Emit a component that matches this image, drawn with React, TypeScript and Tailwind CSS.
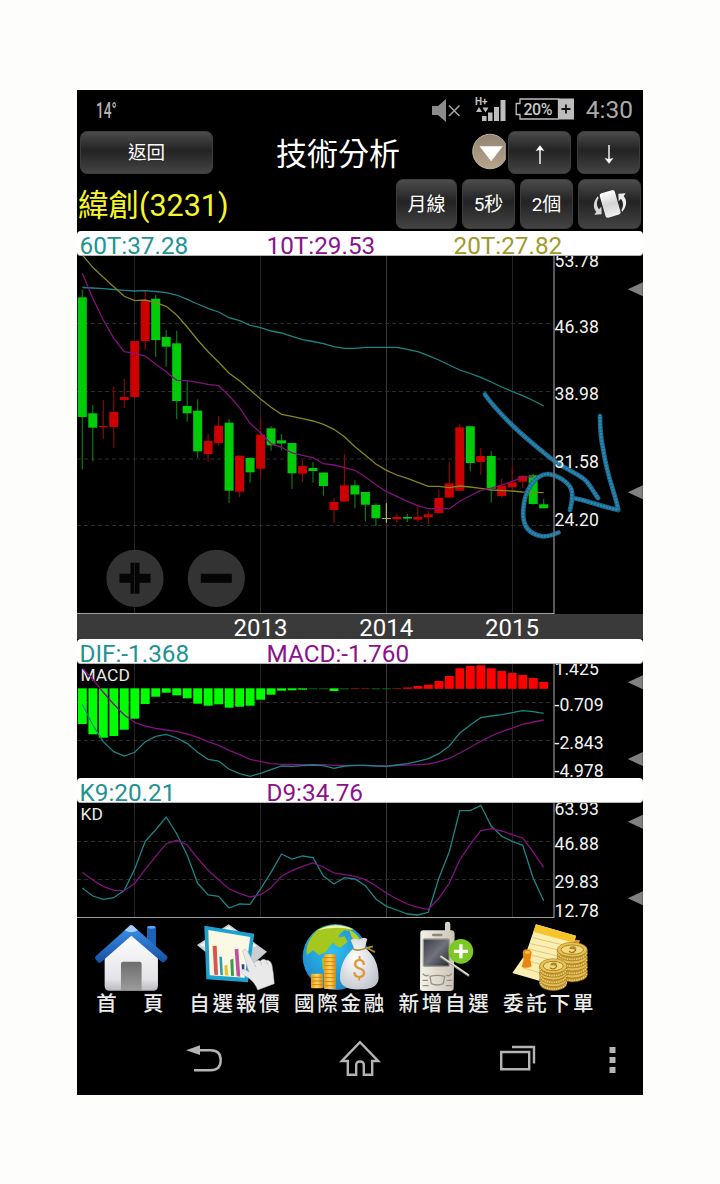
import type { ReactNode } from "react";

const STEP = 10.486;
const FIRST_X = 82.3;

// [high, open/close top, open/close bottom, low, direction]
const candles: [number, number, number, number, string][] = [
  [289.5, 297.3, 417, 469.3, "g"],
  [405, 413.3, 427.7, 461.5, "g"],
  [400, 426, 427.2, 439, "r"],
  [386.7, 412, 427, 447.7, "r"],
  [379, 397, 400, 408, "r"],
  [341, 341, 397, 398, "r"],
  [291, 300, 341, 349.7, "r"],
  [294.7, 298.7, 340, 357, "g"],
  [330, 337, 346.7, 366.7, "g"],
  [330.7, 343.3, 401, 419, "g"],
  [381.3, 406, 413.3, 421.7, "g"],
  [399.3, 410.7, 451.3, 457.7, "g"],
  [434, 441, 454, 461.7, "r"],
  [416, 425.7, 443, 446, "r"],
  [419, 422.7, 490.7, 503, "g"],
  [455.7, 455.7, 491.7, 497, "r"],
  [457, 458, 472.3, 482.7, "g"],
  [418, 434.7, 468.7, 479, "r"],
  [426, 428.3, 445.3, 450.7, "g"],
  [434, 440.3, 443.5, 450.5, "g"],
  [443, 443, 473.3, 488.7, "g"],
  [460, 466, 473.7, 482, "r"],
  [462, 468, 471, 482.7, "g"],
  [472.5, 472.5, 486, 495.7, "g"],
  [497.7, 502, 510, 523, "r"],
  [454, 485.3, 501.5, 502, "r"],
  [480.3, 485.3, 494.5, 508.3, "g"],
  [492, 492, 504.7, 521.5, "g"],
  [503.3, 505, 518.3, 526, "g"],
  [503.3, 518, 518.9, 522.7, "y"],
  [513.7, 517, 519.3, 522.5, "r"],
  [513.7, 517, 518.6, 522, "g"],
  [506.3, 517, 519.7, 521.7, "r"],
  [510.7, 514.3, 517.2, 524, "r"],
  [490, 498, 513, 513.5, "r"],
  [461.7, 483.3, 497.5, 498, "r"],
  [424, 427.3, 490.7, 491, "r"],
  [426, 426.3, 463, 471.3, "g"],
  [448, 456, 462, 474.7, "r"],
  [451, 456, 488.7, 502.7, "g"],
  [478.7, 485.7, 496, 498, "r"],
  [466.7, 482.3, 487.3, 489, "r"],
  [475, 476, 481.7, 487.7, "r"],
  [474, 475.3, 504, 505, "g"],
  [499, 504.3, 508.3, 508.5, "g"],
];

const ma60 = [
  287.5, 288, 288.7, 289.5, 290.3, 291, 290.7, 291.5, 292.7, 295, 299.3, 304,
  308.3, 312, 317.7, 320.7, 325.3, 327.7, 331, 333, 336.3, 339.7, 341.5, 343.7,
  346.7, 348.3, 348.3, 347.3, 347.3, 347.3, 347.3, 349.3, 351.7, 355.7, 360, 365,
  370, 373.5, 377.3, 382, 387, 391.5, 395.7, 400.5, 406,
];
const ma20 = [
  255, 267.3, 277.3, 286.7, 296.3, 300.7, 300, 302.7, 306.3, 315, 327, 340,
  351.7, 362.3, 373.3, 380.7, 390, 399, 407.3, 414.3, 416.3, 418.7, 421, 424.3,
  429.3, 436.7, 446.7, 455.3, 464, 470.3, 475, 478.3, 482.3, 486.3, 486.3, 487.7,
  486, 487, 488.3, 490, 490.5, 491, 492, 492.3, 492.7,
];
const ma10 = [
  273.3, 298.3, 320, 338.3, 351.7, 353.3, 356, 364.3, 371.7, 380.3, 380.7, 382.3,
  384.3, 385.7, 395.7, 407.7, 423.3, 432.7, 443.7, 447.3, 452.9, 455.3, 457.7,
  463.7, 465, 467.7, 470.3, 477, 484.7, 491.7, 496.3, 501.3, 505.7, 508.7, 508.7,
  508.7, 501.3, 495.7, 490.3, 488.2, 485, 481.3, 477.3, 476.7,
];

const ZERO = 688.5;
const histogram = [
  724, 734.3, 737.7, 736, 729.7, 718.7, 704, 696.7, 692.7, 695.3, 698.3, 703.7,
  705.7, 704.3, 707.7, 706.7, 705.7, 699.7, 694.7, 690.7, 690.3, 689.7, 688.6,
  688.6, 691, 688.6, 688.4, 688.4, 688.6, 688.6, 688.4, 687.5, 686, 684.7, 681,
  676, 668.3, 666, 665.3, 668.3, 671, 673, 675, 678, 682,
];
const dif = [
  704.3, 725, 741.7, 751.7, 756, 752.3, 741.7, 736.3, 734.3, 738, 743.3, 752.3,
  759.3, 761, 769.3, 773.7, 776.3, 773.3, 769.7, 766, 766.3, 765.7, 765, 765.7,
  768.3, 766, 765.3, 765.3, 766, 766.3, 765, 763.7, 761.3, 758.7, 753.7, 746, 733,
  725, 717.7, 716, 714.7, 712.7, 710.7, 711.7, 713.3,
];
const macd = [
  668.3, 679.3, 692.3, 704.3, 715, 722.3, 726, 728.3, 730, 731.3, 734, 737.3,
  741.7, 745.3, 750.3, 754.7, 759.3, 761.7, 763.7, 764.3, 764.5, 764.6, 764.7,
  764.7, 765.3, 765.4, 765.5, 765.5, 765.6, 766, 765.5, 765.2, 764.7, 764, 761.7,
  758.3, 753, 747.3, 741.3, 736, 731.7, 728, 724.3, 722, 720,
];
const k9 = [
  888, 896, 899.3, 897.7, 890.3, 869, 841.3, 829.7, 817, 833.7, 855, 883.3, 895,
  896.3, 908, 904, 904.3, 889, 872.3, 854, 859, 856, 857.7, 876, 884, 877.7, 879,
  885.7, 899, 906.3, 910, 914, 915, 912.3, 878.3, 851.7, 810.7, 810.7, 805.3, 826,
  836.3, 841.3, 845.3, 878.3, 900.7,
];
const d9 = [
  872.3, 880, 886.3, 890.3, 890.7, 883.3, 869.3, 856.3, 843.7, 840.3, 845, 858.3,
  870.3, 879.7, 889, 893.3, 897, 894.7, 887.7, 876.3, 870.7, 866.3, 863, 867, 873,
  874.7, 876.3, 879.7, 886, 893, 899, 904, 907.3, 909.3, 898.3, 883.3, 859.7,
  844.3, 830.7, 828.7, 831, 834.7, 838, 852, 867.7,
];

const TEAL = "#1c8585";
const PURPLE = "#84107f";
const OLIVE = "#85851f";

const Line = ({ data, color }: { data: number[]; color: string }) => (
  <polyline
    points={data.map((y, i) => `${FIRST_X + i * STEP},${y}`).join(" ")}
    fill="none"
    stroke={color}
    strokeWidth="1.3"
  />
);

type PanelProps = {
  top: number;
  height: number;
  grid: number[];
  labels: [string, number][];
  markers: number[];
  bottomLine?: boolean;
  children: ReactNode;
};

const Panel = ({
  top,
  height,
  grid,
  labels,
  markers,
  bottomLine = true,
  children,
}: PanelProps) => (
  <svg
    className="block shrink-0"
    width="566"
    height={height}
    viewBox={`77 ${top} 566 ${height}`}
  >
    {[134.5, 260.5, 386.5, 512.5].map((x) => (
      <path
        key={x}
        d={`M${x} ${top}v${height}`}
        stroke={x === 386.5 ? "#383838" : "#242424"}
      />
    ))}
    {grid.map((y) => (
      <path
        key={y}
        d={`M77 ${y}H553`}
        stroke="#2c2c2c"
        strokeDasharray="4 3"
      />
    ))}
    {children}
    <path d={`M554 ${top}v${height}`} stroke="#707070" strokeWidth="1.6" />
    {bottomLine && (
      <path d={`M77 ${top + height - 0.5}H554`} stroke="#a0a0a0" />
    )}
    {labels.map(([text, y]) => (
      <text key={text} x="554.6" y={y} fill="#f2f2f2" fontSize="17.6">
        {text}
      </text>
    ))}
    {markers.map((y) => (
      <path key={y} d={`M627.8 ${y}l15 -7v14z`} fill="#808080" />
    ))}
  </svg>
);

const Legend = ({ items }: { items: [string, string][] }) => (
  <div className="flex h-[25px] shrink-0 rounded-[4px] border-b border-[#b5b5b5] bg-white pl-[2.5px]">
    {items.map(([text, color]) => (
      <span
        key={text}
        className="w-[187px] text-[24.3px] leading-[29px]"
        style={{ color }}
      >
        {text}
      </span>
    ))}
  </div>
);

const Button = ({
  className,
  children,
}: {
  className: string;
  children: ReactNode;
}) => (
  <button
    className={`flex shrink-0 items-center justify-center rounded-[7px] border border-[#3c3c3c] bg-linear-to-b from-[#4c4c4c] via-[#232323] via-45% to-[#444] text-white ${className}`}
  >
    {children}
  </button>
);

const StatusBar = () => (
  <div className="flex h-[41px] shrink-0 items-center pr-[10px] pl-[19px] text-[#aaa]">
    <div className="w-[335px]">
      <span className="inline-block origin-left scale-x-[.62] text-[22px] font-medium text-[#b4b4b4]">
        14°
      </span>
    </div>
    <svg width="30" height="24" viewBox="0 0 30 24" className="mt-px shrink-0">
      <path d="M1 7h6l8 -7v23l-8 -7H1z" fill="#8c8c8c" />
      <path d="M18 6.5l10.500 10.500M28.500 6.500l-10.500 10.500" stroke="#a2a2a2" strokeWidth="1.6" />
    </svg>
    <svg width="32" height="26" viewBox="0 0 32 26" className="ml-[14px] -mt-[4px] shrink-0">
      <text x="0" y="8.600" fontSize="10" fontWeight="700" fill="#c4c4c4">
        H+
      </text>
      <path d="M1 16l3 -5 3 5zM7.500 11.500h6l-3 5z" fill="#bbb" />
      <path
        d="M7 20h4.500v5h-4.500zM13 16.500h4.500v8.500h-4.500zM19 11h5v14h-5zM25.500 4h5v21h-5z"
        fill="#bdbdbd"
      />
    </svg>
    <div className="-mt-[3px] ml-[8px] flex h-[22px] w-[59px] shrink-0 items-center">
      <svg width="59" height="22" viewBox="0 0 59 22">
        <path
          d="M43.500 1H5v4.500H1.200v11H5V21h38.500z"
          fill="none"
          stroke="#c0c0c0"
          strokeWidth="1.300"
        />
        <rect x="44" y="0.500" width="15" height="21" fill="#bcbcbc" />
        <path d="M46.500 11h9M51 6.500v9" stroke="#111" strokeWidth="1.800" />
        <text x="8.500" y="16.800" fontSize="16" fontWeight="500" fill="#c8c8c8" textLength="29">
          20%
        </text>
      </svg>
    </div>
    <span className="ml-auto text-[24.500px] leading-none">4:30</span>
  </div>
);

const ArrowIcon = ({ down = false }: { down?: boolean }) => (
  <svg
    width="14"
    height="22"
    viewBox="0 0 14 22"
    className={down ? "mt-[3px] rotate-180" : "mt-[4px]"}
    fill="none"
    stroke="#fff"
  >
    <path d="M7 20V3" strokeWidth="1.400" />
    <path d="M7 1.500l4 5.300c-1.500 -1 -6.500 -1 -8 0z" fill="#fff" strokeWidth=".4" />
  </svg>
);

const RotateIcon = () => (
  <svg width="34" height="34" viewBox="0 0 102 102">
    <defs>
      <linearGradient id="phone" x1="0" y1="0" x2="0" y2="1">
        <stop offset="0" stopColor="#fff" />
        <stop offset=".5" stopColor="#d4d4d4" />
        <stop offset="1" stopColor="#efefef" />
      </linearGradient>
    </defs>
    <rect
      x="28"
      y="13"
      width="47"
      height="76"
      rx="7"
      fill="url(#phone)"
      transform="rotate(-16 51 51)"
    />
    <path d="M14 28C-1 46 0 64 10 74l-6 9 22 -1 -1 -23 -7 8C10 56 10 44 17 33z" fill="#d8d8d8" />
    <path
      d="M14 28C-1 46 0 64 10 74l-6 9 22 -1 -1 -23 -7 8C10 56 10 44 17 33z"
      fill="#ececec"
      transform="rotate(180 51 51)"
    />
  </svg>
);

const Header = () => (
  <div className="h-[100px] shrink-0">
    <div className="flex h-[48px] items-start pl-[3px]">
      <Button className="h-[43px] w-[133px] pt-[3px] text-[18.500px]">返回</Button>
      <h1 className="ml-[63px] w-[126px] text-[31px] leading-[48px] whitespace-nowrap text-white">
        技術分析
      </h1>
      <svg width="36" height="40" viewBox="0 0 36 40" className="ml-[70px] shrink-0">
        <defs>
          <linearGradient id="tan" x1="0" y1="0" x2="0" y2="1">
            <stop offset="0" stopColor="#918473" />
            <stop offset="1" stopColor="#b6a58c" />
          </linearGradient>
        </defs>
        <path
          d="M33.300 12.500A17.300 17.300 0 1 0 33.300 28.500z"
          fill="url(#tan)"
          stroke="#cfc3ae"
          strokeWidth=".8"
        />
        <path d="M7.500 15.300h23.300l-11.600 15z" fill="#fff" />
      </svg>
      <Button className="h-[43px] w-[63px]">
        <ArrowIcon />
      </Button>
      <Button className="ml-[6px] h-[43px] w-[63px]">
        <ArrowIcon down />
      </Button>
    </div>
    <div className="flex items-start text-[19px]">
      <span className="h-[50px] w-[319px] pl-px text-[30.500px] leading-[53px] text-[#f6f62a]">
        緯創(3231)
      </span>
      <Button className="h-[50px] w-[61px] pt-[3px]">月線</Button>
      <Button className="ml-[5px] h-[50px] w-[53px] pt-[3px]">5秒</Button>
      <Button className="ml-[5px] h-[50px] w-[53px] pt-[3px]">2個</Button>
      <Button className="ml-[5px] h-[50px] w-[63px]">
        <RotateIcon />
      </Button>
    </div>
  </div>
);

const candleFill: Record<string, string> = {
  g: "#00cc0a",
  r: "#cc0000",
  y: "#b9b95a",
};
const wickStroke: Record<string, string> = {
  g: "#0a7a0d",
  r: "#8a0808",
  y: "#b9b95a",
};

const Scribble = ({ d }: { d: string }) => (
  <g fill="none" strokeLinecap="round" strokeLinejoin="round">
    <path d={d} stroke="#1e6f96" strokeWidth="4.600" />
    <path d={d} stroke="#2b8ab4" strokeWidth="2.200" />
    <path d={d} stroke="#14506e" strokeWidth="5" strokeDasharray=".8 2.400" strokeLinecap="butt" opacity=".6" />
  </g>
);

const PriceChart = () => (
  <Panel
    top={256}
    height={358}
    grid={[323.5, 391.5, 459, 525.5]}
    labels={[
      ["53.78", 267],
      ["46.38", 332.8],
      ["38.98", 400.2],
      ["31.58", 467.8],
      ["24.20", 525.5],
    ]}
    markers={[289.3, 492.3]}
  >
    {candles.map(([high, top, bottom, low, dir], i) => {
      const x = FIRST_X + i * STEP;
      return (
        <g key={i}>
          <path d={`M${x} ${high}V${low}`} stroke={wickStroke[dir]} strokeWidth="1.200" />
          <rect
            x={Math.max(77.5, x - 4.5)}
            y={top}
            width="9"
            height={bottom - top}
            fill={candleFill[dir]}
          />
        </g>
      );
    })}
    <Line data={ma60} color={TEAL} />
    <Line data={ma20} color={OLIVE} />
    <Line data={ma10} color={PURPLE} />
    <circle cx="135" cy="578.300" r="28.600" fill="#333" />
    <path d="M119.500 578.300h31M135 562.800v31" stroke="#050505" strokeWidth="9" />
    <path d="M134.500 563v31" stroke="#1c1c1c" />
    <circle cx="216.300" cy="578.300" r="28.600" fill="#333" />
    <path d="M200.800 578.300h31" stroke="#050505" strokeWidth="9" />
    <Scribble d="M485 394.500C490 402 500 413 510 423S533 444 546.700 455C556 463 562 466 570 470.500C578 475 583 477 587 482C592 488 594 493 598 498" />
    <Scribble d="M600 416C600 428 601 440 603.300 450C606 468 609 477 613 490C615 497 617 503 618.300 510C609 508 602 506 593.300 503.300C585 500.500 579 499 572 497.800" />
    <Scribble d="M570 510C572 502 573 495 571.500 490C569 482 557 475 548.300 474C541 474 536 478 531.500 484C526 492 522.500 503 523.300 517C524 527 530 534 541.700 536.200C548 537 553 535 558.500 532.500" />
  </Panel>
);

const MacdChart = () => (
  <Panel
    top={664}
    height={114}
    grid={[702.5, 740.5]}
    labels={[
      ["1.425", 674.5],
      ["-0.709", 710.8],
      ["-2.843", 749],
      ["-4.978", 777.4],
    ]}
    markers={[682.3, 759]}
    bottomLine={false}
  >
    <text x="80.500" y="680.800" fontSize="17.400" fill="#e8e8e8">
      MACD
    </text>
    {histogram.map((y, i) => {
      const x = Math.max(77.6, FIRST_X + i * STEP - 4.4);
      const flat = Math.abs(y - ZERO) < 0.5;
      const up = y < ZERO;
      const fill = up ? (flat ? "#7a0808" : "#ff0000") : flat ? "#0a6a0a" : "#00ff00";
      return (
        <rect
          key={i}
          x={x}
          y={up ? (flat ? 688 : y) : 688.3}
          width="8.900"
          height={flat ? 1 : up ? 688.8 - y : y - 688.3}
          fill={fill}
        />
      );
    })}
    <Line data={macd} color={PURPLE} />
    <Line data={dif} color={TEAL} />
  </Panel>
);

const KdChart = () => (
  <Panel
    top={803}
    height={115}
    grid={[841.5, 879.5]}
    labels={[
      ["63.93", 814.5],
      ["46.88", 850.3],
      ["29.83", 888.3],
      ["12.78", 916.6],
    ]}
    markers={[821.7, 898.3]}
  >
    <text x="80.500" y="820.300" fontSize="17.400" fill="#e8e8e8">
      KD
    </text>
    <Line data={k9} color={TEAL} />
    <Line data={d9} color={PURPLE} />
  </Panel>
);

const HouseIcon = () => (
  <svg width="104.600" height="74" viewBox="27 9 314 222">
    <defs>
      <linearGradient id="wall" x1="0" y1="0" x2="0" y2="1">
        <stop offset="0" stopColor="#fff" />
        <stop offset=".8" stopColor="#e4e4e8" />
        <stop offset="1" stopColor="#b9b9bd" />
      </linearGradient>
      <linearGradient id="roof" x1="0" y1="0" x2="0" y2="1">
        <stop offset="0" stopColor="#3f93ea" />
        <stop offset="1" stopColor="#1450a4" />
      </linearGradient>
      <linearGradient id="door" x1="0" y1="0" x2="0" y2="1">
        <stop offset="0" stopColor="#6c6c6c" />
        <stop offset="1" stopColor="#9b9b9b" />
      </linearGradient>
    </defs>
    <rect x="231" y="33" width="27" height="75" rx="5" fill="#1c62b8" />
    <ellipse cx="244.500" cy="37" rx="12" ry="4" fill="#5aa4ea" />
    <path d="M184 52L264 122V212q0 15 -15 15H119q-15 0 -15 -15V122z" fill="url(#wall)" />
    <path d="M153 225v-78q0 -7 7 -7h48q7 0 7 7v78z" fill="url(#door)" />
    <path
      d="M176 35q8 -8 16 0L291 123q4 5 0 9l-7 8q-4 4 -9 0L184 62 93 142q-5 4 -9 0l-7 -9q-4 -4 0 -9z"
      fill="url(#roof)"
    />
    <path d="M164 46l12 -11q8 -8 16 0l12 11q-20 12 -40 0z" fill="#b9dafa" opacity=".85" />
  </svg>
);

const QuoteIcon = () => (
  <svg width="104.600" height="74" viewBox="341 9 314 222">
    <path d="M380 90L475 28 590 110 500 190z" fill="#c9ced2" />
    <path d="M388 90L475 34 560 92 480 130z" fill="#eef1f3" />
    <path d="M402 32L552 56 533 202 408 193z" fill="#1ba2cf" />
    <path d="M414 45L540 66 523 188 418 181z" fill="#fbf8e4" />
    <path d="M427 93l12 -1 4 88 -11 -1z" fill="#d9534f" />
    <path d="M447 125l8 0 3 56 -8 -1z" fill="#2d9db5" />
    <path d="M462 152l9 -3 3 33 -10 -1z" fill="#e2c52e" />
    <path d="M480 134l9 -3 2 52 -9 -1z" fill="#3a9a4a" />
    <path d="M493 103l11 -2 6 84 -11 -1z" fill="#bf4fa0" />
    <path d="M514 148l8 0 0 20 -7 -4z" fill="#333c94" />
    <path
      d="M517 108q6 -10 14 0l20 36q10 -12 19 -6 8 -10 18 -2 12 -2 17 14 5 26 7 56l-50 19q-8 -26 -40 -44 -16 -12 -8 -18 12 -2 22 8z"
      fill="#e9e9e9"
      stroke="#b5b5b5"
      strokeWidth="1.500"
    />
    <path d="M553 146l3 10M571 140l3 10M588 138l3 10" stroke="#b5b5b5" strokeWidth="2" />
  </svg>
);

const FinanceIcon = () => (
  <svg width="104.600" height="74" viewBox="655 9 314 222">
    <defs>
      <linearGradient id="gold" x1="0" y1="0" x2="1" y2="0">
        <stop offset="0" stopColor="#e99a13" />
        <stop offset=".5" stopColor="#ffd75e" />
        <stop offset="1" stopColor="#d98a0c" />
      </linearGradient>
      <radialGradient id="globe" cx=".45" cy=".4" r=".65">
        <stop offset="0" stopColor="#2fc0ee" />
        <stop offset="1" stopColor="#1a83c8" />
      </radialGradient>
      <radialGradient id="bag" cx=".4" cy=".4" r=".7">
        <stop offset="0" stopColor="#fff" />
        <stop offset="1" stopColor="#bfc3cc" />
      </radialGradient>
    </defs>
    <circle cx="798" cy="126" r="99" fill="url(#globe)" />
    <path d="M742 46q50 -28 110 -4 -12 8 -28 4l-14 12 -10 24 -14 4 -16 24 -22 10 -18 -14 -18 14q-8 -34 30 -74z" fill="#a5c81e" />
    <path d="M790 72l34 -8 10 16 -22 18 -16 -8zM757 130l16 -4 14 14 2 28 -12 22 -18 -30z" fill="#a5c81e" />
    <path d="M838 44q22 10 34 30l-14 10 -12 -18z" fill="#b8cf2a" />
    <path d="M742 46q56 -30 110 -2 -56 -12 -110 2z" fill="#f1f6a8" />
    <rect x="763" y="118" width="36" height="104" rx="3" fill="url(#gold)" />
    <rect x="724" y="176" width="36" height="44" rx="3" fill="url(#gold)" />
    <path
      d="M764 128h34M764 140h34M764 152h34M764 164h34M764 176h34M764 188h34M764 200h34M764 212h34M725 187h34M725 198h34M725 209h34"
      stroke="#c97e0c"
      strokeWidth="2.500"
    />
    <path d="M843 75q14 -8 24 0 20 -12 26 -2l-8 26q42 28 42 90 -2 34 -52 34 -62 4 -64 -34 0 -54 42 -90z" fill="url(#bag)" />
    <path d="M850 102q16 8 42 -4l24 14M886 100l24 -6" stroke="#b1912a" strokeWidth="5" fill="none" />
    <text x="847" y="189" fontSize="78" fill="#dc9a3c">
      $
    </text>
  </svg>
);

const PhoneIcon = () => (
  <svg width="104.600" height="74" viewBox="99 9 314 222">
    <defs>
      <linearGradient id="screen" x1="0" y1="0" x2="1" y2="1">
        <stop offset="0" stopColor="#3c3f49" />
        <stop offset=".5" stopColor="#70737c" />
        <stop offset="1" stopColor="#2b2d34" />
      </linearGradient>
      <linearGradient id="body" x1="0" y1="0" x2="1" y2="0">
        <stop offset="0" stopColor="#f4f1e8" />
        <stop offset="1" stopColor="#c9c4b6" />
      </linearGradient>
    </defs>
    <rect x="255" y="20" width="16" height="50" rx="7" fill="#d6d2c6" />
    <path d="M190 46h84q10 0 10 12l-3 162q0 8 -10 8h-82q-10 0 -9 -10l1 -162q0 -10 9 -10z" fill="url(#body)" />
    <rect x="216" y="56" width="32" height="8" rx="4" fill="#8c887c" />
    <rect x="188" y="70" width="82" height="86" rx="6" fill="#a09c90" />
    <rect x="192" y="74" width="74" height="78" fill="url(#screen)" />
    <path
      d="M210 184q22 -6 44 0l-4 22q-18 8 -36 0zM188 176q8 10 18 4M258 180q10 6 18 -4M188 196h16M260 196h16M188 212h18M258 212h18"
      stroke="#969184"
      strokeWidth="4"
      fill="none"
    />
    <circle cx="303" cy="109" r="37" fill="#7cc827" />
    <path d="M282 109h42M303 88v42" stroke="#fff" strokeWidth="10" />
    <path d="M243 125L325 181" stroke="#9c968a" strokeWidth="7" strokeLinecap="round" />
    <path d="M243 124L325 179" stroke="#ece7da" strokeWidth="3.500" strokeLinecap="round" />
  </svg>
);

const CoinStack = ({
  x,
  y,
  rx,
  gap,
  count,
}: {
  x: number;
  y: number;
  rx: number;
  gap: number;
  count: number;
}) => (
  <g>
    {Array.from({ length: count }, (_, i) => count - 1 - i).map((i) => (
      <g key={i} stroke="#8f6a1c" strokeWidth="1.500">
        <path
          d={`M${x - rx} ${y + i * gap}v12a${rx} 22 0 0 0 ${rx * 2} 0v-12z`}
          fill="#c3942c"
        />
        <path
          d={`M${x - rx + 2} ${y + 8 + i * gap}a${rx - 2} 21 0 0 0 ${rx * 2 - 4} 0`}
          fill="none"
          stroke="#f0d47c"
          strokeWidth="5"
          strokeDasharray="4 3"
        />
        <ellipse cx={x} cy={y + i * gap} rx={rx} ry="22" fill="#e5c155" />
      </g>
    ))}
    <ellipse cx={x} cy={y} rx={rx - 11} ry="14" fill="#f2d97c" stroke="#b08425" strokeWidth="3" />
    <path d={`M${x - 10} ${y + 5}q10 8 18 -1t-14 -8q4 -8 16 -2`} fill="none" stroke="#a67a1e" strokeWidth="4" />
  </g>
);

const OrderIcon = () => (
  <svg width="104.600" height="74" viewBox="413 9 314 222">
    <path d="M530 28L650 62 612 218 459 174 500 115z" fill="#faeeb0" />
    <path d="M530 28L650 62 645 84 522 50z" fill="#f6c52e" />
    <path
      d="M520 68l110 26M514 86l106 24M509 102l90 22M516 120l70 18M508 138l50 14M490 158l60 18"
      stroke="#e3c878"
      strokeWidth="3"
    />
    <path d="M648 74l14 2 -4 14 -12 -4z" fill="#e8922c" />
    <path d="M490 112q2 -10 14 -9t13 12l-4 20 4 18q-12 10 -30 2l6 -20z" fill="#e8860f" />
    <ellipse cx="504" cy="112" rx="8" ry="5" fill="#fbbf4a" />
    <CoinStack x={639} y={104} rx={45} gap={21} count={4} />
    <CoinStack x={582} y={153} rx={41} gap={20} count={3} />
  </svg>
);

const menu = [
  { label: "首　頁", icon: <HouseIcon /> },
  { label: "自選報價", icon: <QuoteIcon /> },
  { label: "國際金融", icon: <FinanceIcon /> },
  { label: "新增自選", icon: <PhoneIcon /> },
  { label: "委託下單", icon: <OrderIcon /> },
];

const BottomMenu = () => (
  <div className="flex h-[102px] shrink-0 pl-[2px]">
    {menu.map((item) => (
      <div key={item.label} className="flex w-[104.600px] shrink-0 flex-col items-center">
        {item.icon}
        <span className="text-[20.500px] leading-[25px] font-medium tracking-[2.800px] whitespace-nowrap text-[#ececec]">
          {item.label}
        </span>
      </div>
    ))}
  </div>
);

const NavBar = () => (
  <div className="flex h-[75px] shrink-0 items-start pt-[18px] pl-[108px]">
    <svg width="40" height="40" viewBox="0 0 40 40" fill="none" stroke="#b4b4b4" strokeWidth="2.400">
      <path d="M12 12.200h13.500q10.200 0 10.200 10t-10.200 10H9" />
      <path d="M1 12.300l14 -5v9.800z" fill="#b4b4b4" stroke="none" />
    </svg>
    <svg width="44" height="40" viewBox="0 0 44 40" className="ml-[113px]" fill="none" stroke="#b4b4b4" strokeWidth="2.400">
      <path d="M22 4.200L3.800 23h6v13.800h8.400V27q0 -3.500 3.800 -3.500t3.800 3.500v9.800h8.400V23h6z" />
    </svg>
    <svg width="40" height="40" viewBox="0 0 40 40" className="ml-[115px]" fill="none" stroke="#b4b4b4" strokeWidth="2.400">
      <path d="M4.200 14h28v17.200h-28zM15 9h22v16.500" />
    </svg>
    <svg width="8" height="40" viewBox="0 0 8 40" className="ml-[71px]" fill="#b4b4b4">
      <path d="M1.500 9h6v6h-6zM1.500 19h6v6h-6zM1.500 29h6v6h-6z" />
    </svg>
  </div>
);

export default function App() {
  return (
    <div className="flex h-[1184px] w-[720px] justify-center bg-[#fdfdfb] pt-[90px] font-['Roboto','Noto_Sans_CJK_TC',sans-serif]">
      <div className="flex h-[1005px] w-[566px] flex-col overflow-hidden bg-black">
        <StatusBar />
        <Header />
        <Legend
          items={[
            ["60T:37.28", "#219393"],
            ["10T:29.53", "#8b128b"],
            ["20T:27.82", "#a09a2a"],
          ]}
        />
        <PriceChart />
        <div className="flex h-[25px] shrink-0 bg-[#3a3a3a] pl-[120.500px] text-[24px] leading-[29px] text-white">
          {["2013", "2014", "2015"].map((year) => (
            <span key={year} className="w-[125.800px] text-center">
              {year}
            </span>
          ))}
        </div>
        <Legend
          items={[
            ["DIF:-1.368", "#219393"],
            ["MACD:-1.760", "#8b128b"],
          ]}
        />
        <MacdChart />
        <Legend
          items={[
            ["K9:20.21", "#219393"],
            ["D9:34.76", "#8b128b"],
          ]}
        />
        <KdChart />
        <BottomMenu />
        <NavBar />
      </div>
    </div>
  );
}
